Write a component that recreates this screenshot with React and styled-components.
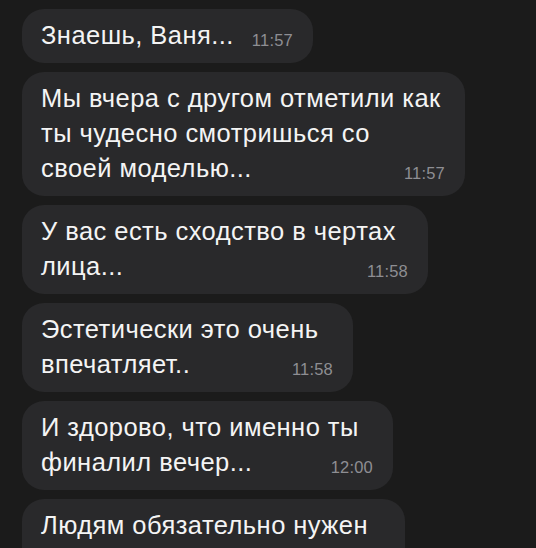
import React from "react";
import styled, { createGlobalStyle } from "styled-components";

const GlobalStyle = createGlobalStyle`
  html, body {
    margin: 0;
    padding: 0;
    background: #1b1b1b;
  }
  body {
    font-family: "Liberation Sans", Arial, sans-serif;
    -webkit-font-smoothing: antialiased;
  }
`;

const Screen = styled.div`
  width: 536px;
  height: 548px;
  overflow: hidden;
  background: #1b1b1b;
  padding: 8.5px 0 0 22px;
  box-sizing: border-box;
  display: flex;
  flex-direction: column;
  align-items: flex-start;
  gap: 9px;
`;

const Bubble = styled.div`
  box-sizing: border-box;
  min-width: ${(p) => p.$width}px;
  background: #29292b;
  border-radius: 22px;
  padding: 9.5px 20px 9.5px 19px;
  color: #f4f4f4;
  font-size: 25.5px;
  line-height: 35px;
  letter-spacing: 0.45px;
  flex-shrink: 0;
`;

const Line = styled.div`
  white-space: nowrap;
`;

const LastLine = styled.div`
  display: flex;
  align-items: baseline;
  gap: 18px;
  white-space: nowrap;
`;

const Time = styled.span`
  font-size: 16.5px;
  line-height: 20px;
  letter-spacing: 0.2px;
  color: #8e8e93;
  position: relative;
  top: 2px;
  margin-left: auto;
`;

const messages = [
  { id: 1, width: 290, lines: ["Знаешь, Ваня..."], time: "11:57" },
  {
    id: 2,
    width: 443,
    lines: ["Мы вчера с другом отметили как", "ты чудесно смотришься со", "своей моделью..."],
    time: "11:57",
  },
  { id: 3, width: 406, lines: ["У вас есть сходство в чертах", "лица..."], time: "11:58" },
  { id: 4, width: 331, lines: ["Эстетически это очень", "впечатляет.."], time: "11:58" },
  { id: 5, width: 371, lines: ["И здорово, что именно ты", "финалил вечер..."], time: "12:00" },
  { id: 6, width: 383, lines: ["Людям обязательно нужен", "такой пример..."], time: "12:01" },
];

const Message = ({ width, lines, time }) => {
  const head = lines.slice(0, -1);
  const last = lines[lines.length - 1];
  return (
    <Bubble $width={width}>
      {head.map((l, i) => (
        <Line key={i}>{l}</Line>
      ))}
      <LastLine>
        <span>{last}</span>
        <Time>{time}</Time>
      </LastLine>
    </Bubble>
  );
};

export default function App() {
  return (
    <>
      <GlobalStyle />
      <Screen>
        {messages.map((m) => (
          <Message key={m.id} width={m.width} lines={m.lines} time={m.time} />
        ))}
      </Screen>
    </>
  );
}
